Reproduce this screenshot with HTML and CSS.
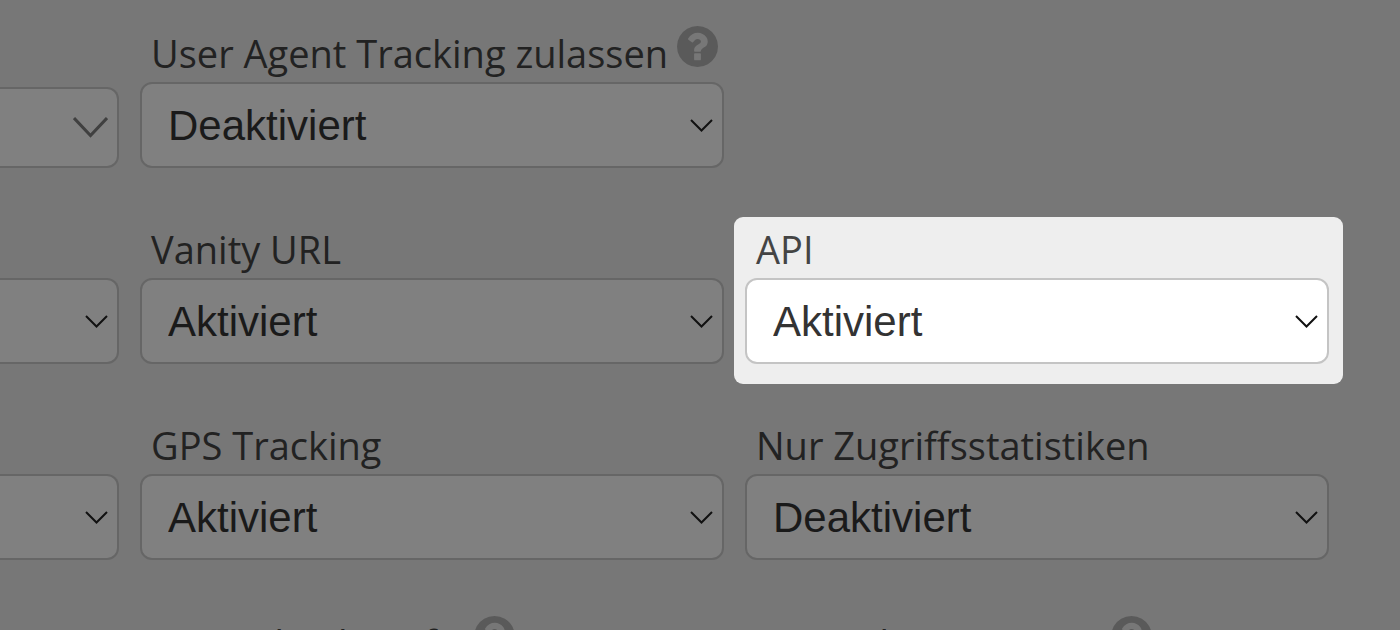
FILE: index.html
```
<!DOCTYPE html>
<html lang="de">
<head>
    <meta charset="UTF-8">
    <meta name="viewport" content="width=device-width, initial-scale=1.0">
    <title>Einstellungen</title>
    <link rel="stylesheet" href="styles.css">
</head>
<body>
    <svg class="sprite" aria-hidden="true">
        <symbol id="icon-help" viewBox="128 128 1536 1536">
            <path d="M1024 1376v-192q0-14-9-23t-23-9h-192q-14 0-23 9t-9 23v192q0 14 9 23t23 9h192q14 0 23-9t9-23zm256-672q0-88-55.500-163t-138.500-116-170-41q-243 0-371 213-15 24 8 42l132 100q7 6 19 6 16 0 25-12 53-68 86-92 34-24 86-24 48 0 85.500 26t37.500 59q0 38-20 61t-68 45q-63 28-115.500 86.500t-52.500 125.500v36q0 14 9 23t23 9h192q14 0 23-9t9-23q0-19 21.500-49.500t54.500-49.500q32-18 49-28.500t46-35 44.500-48 28-60.500 12.500-81zm384 192q0 209-103 385.500t-279.500 279.500-385.500 103-385.500-103-279.500-279.500-103-385.500 103-385.500 279.500-279.500 385.500-103 385.500 103 279.500 279.500 103 385.500z"/>
        </symbol>
    </svg>

    <form class="settings">
        <div class="field cut">
            <select class="large-arrow" aria-label="Option 1"><option></option></select>
        </div>
        <div class="field">
            <div class="label-row">
                <label for="user-agent">User Agent Tracking zulassen</label>
                <svg class="help"><use href="#icon-help"/></svg>
            </div>
            <select id="user-agent"><option>Deaktiviert</option><option>Aktiviert</option></select>
        </div>
        <div class="field"></div>

        <div class="field cut">
            <select aria-label="Option 2"><option></option></select>
        </div>
        <div class="field">
            <div class="label-row">
                <label for="vanity-url">Vanity URL</label>
            </div>
            <select id="vanity-url"><option>Aktiviert</option><option>Deaktiviert</option></select>
        </div>
        <div class="field highlight">
            <div class="label-row">
                <label for="api">API</label>
            </div>
            <select id="api"><option>Aktiviert</option><option>Deaktiviert</option></select>
        </div>

        <div class="field cut">
            <select aria-label="Option 3"><option></option></select>
        </div>
        <div class="field">
            <div class="label-row">
                <label for="gps">GPS Tracking</label>
            </div>
            <select id="gps"><option>Aktiviert</option><option>Deaktiviert</option></select>
        </div>
        <div class="field">
            <div class="label-row">
                <label for="stats">Nur Zugriffsstatistiken</label>
            </div>
            <select id="stats"><option>Deaktiviert</option><option>Aktiviert</option></select>
        </div>

        <div class="field cut"></div>
        <div class="field last">
            <div class="label-row">
                <label for="qr-plans">QR Code Pläne fix</label>
                <svg class="help"><use href="#icon-help"/></svg>
            </div>
            <select id="qr-plans"><option>Aktiviert</option></select>
        </div>
        <div class="field last">
            <div class="label-row">
                <label for="qr-create">QR Code Generator</label>
                <svg class="help"><use href="#icon-help"/></svg>
            </div>
            <select id="qr-create"><option>Aktiviert</option></select>
        </div>
    </form>
</body>
</html>
```
FILE: styles.css
```
* {
    box-sizing: border-box;
}
html {
    overflow: hidden;
}
body {
    margin: 0;
    background-color: #777;
    color: #222;
    font-family: "Open Sans", sans-serif;
}
.sprite {
    display: none;
}
.settings {
    display: grid;
    grid-template-columns: 119px 1fr 1fr;
    column-gap: 21px;
    row-gap: 50px;
    padding: 22px 71px 22px 0;
}
.field {
    display: flex;
    flex-direction: column;
    justify-content: flex-end;
    min-width: 0;
}
.field.last {
    padding-top: 2px;
}
.label-row {
    display: flex;
    align-items: flex-start;
    gap: 9px;
    height: 60px;
    padding: 4px 0 0 11px;
}
label {
    font-size: 38px;
    line-height: 54px;
    white-space: nowrap;
}
.help {
    flex: none;
    width: 41px;
    height: 41px;
    fill: #5a5a5a;
}
select {
    appearance: none;
    width: 100%;
    height: 86px;
    padding: 0 60px 0 26px;
    border: 2px solid #666;
    border-radius: 12px;
    background: #808080 url("data:image/svg+xml,%3Csvg xmlns='http://www.w3.org/2000/svg' width='23' height='13' fill='none' stroke='%23111' stroke-width='2'%3E%3Cpath d='M1 1l10.500 10.500L22 1'/%3E%3C/svg%3E") no-repeat right 9px center;
    color: #1a1a1a;
    font-family: "Liberation Sans", Arial, sans-serif;
    font-size: 42px;
}
.cut select {
    border-left: none;
    border-radius: 0 12px 12px 0;
}
select.large-arrow {
    height: 81px;
    background-image: url("data:image/svg+xml,%3Csvg xmlns='http://www.w3.org/2000/svg' width='35' height='21' fill='none' stroke='%23404040' stroke-width='3'%3E%3Cpath d='M1 1l16.500 17.500L34 1'/%3E%3C/svg%3E");
}

/* active field, lifted out of the dimmed form */
.highlight {
    margin: -1px -14px -20px -11px;
    padding: 0 14px 20px 11px;
    border-radius: 9px;
    background-color: #eee;
    color: #444;
}
.highlight select {
    border-color: #c4c4c4;
    background-color: #fff;
    color: #333;
}
```
